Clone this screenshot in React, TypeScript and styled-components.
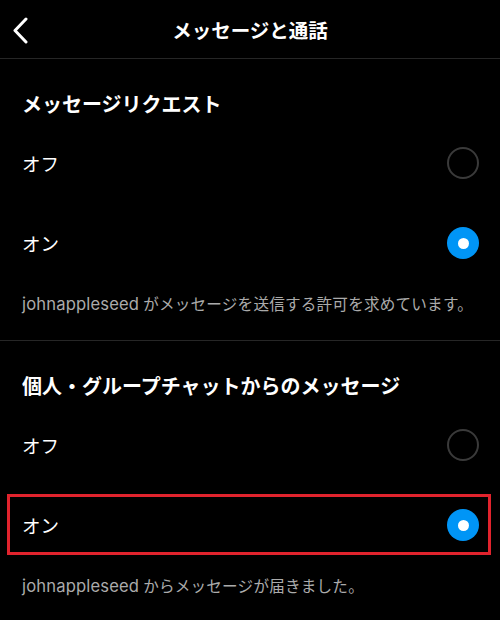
import React from "react";
import styled, { createGlobalStyle } from "styled-components";

const GlobalStyle = createGlobalStyle`
  html, body {
    margin: 0;
    padding: 0;
    background: #000;
  }
  body {
    font-family: "Inter", "Noto Sans CJK JP", "Noto Sans", sans-serif;
    color: #fff;
    -webkit-font-smoothing: antialiased;
  }
`;

const Page = styled.div`
  width: 500px;
  height: 620px;
  background: #000;
  overflow: hidden;
`;

const Header = styled.header`
  display: grid;
  grid-template-columns: 60px 1fr 60px;
  align-items: center;
  height: 58px;
  border-bottom: 1px solid #262626;
`;

const BackButton = styled.div`
  display: flex;
  align-items: center;
  padding-left: 12px;
  padding-top: 2px;
`;

const Title = styled.h1`
  margin: 0;
  text-align: center;
  font-family: "Noto Sans CJK JP", sans-serif;
  font-size: 19.5px;
  font-weight: 600;
  line-height: 24px;
  padding-top: 1px;
`;

const Section = styled.section<{ $divider?: boolean }>`
  display: flex;
  flex-direction: column;
  padding: 33px 0 26px;
  border-bottom: ${(p) => (p.$divider ? "1px solid #262626" : "none")};
`;

const SectionTitle = styled.h2`
  margin: 0 0 7px;
  padding: 0 22px;
  font-family: "Noto Sans CJK JP", sans-serif;
  font-size: 20px;
  font-weight: 700;
  line-height: 24px;
`;

const Row = styled.div<{ $highlight?: boolean }>`
  position: relative;
  display: flex;
  align-items: center;
  justify-content: space-between;
  height: 80px;
  padding: 0 21px 0 22px;
  box-sizing: border-box;

  ${(p) =>
    p.$highlight &&
    `
    &::after {
      content: "";
      position: absolute;
      top: 9px;
      bottom: 10px;
      left: 7px;
      right: 9px;
      border: 3.5px solid #e1232d;
      pointer-events: none;
    }
  `}
`;

const RowLabel = styled.span`
  font-family: "Noto Sans CJK JP", sans-serif;
  font-size: 18.5px;
  font-weight: 400;
  line-height: 24px;
`;

const Radio = styled.span<{ $checked?: boolean }>`
  display: flex;
  align-items: center;
  justify-content: center;
  width: 32px;
  height: 32px;
  box-sizing: border-box;
  border-radius: 50%;
  border: ${(p) => (p.$checked ? "none" : "2px solid #3a3a3a")};
  background: ${(p) => (p.$checked ? "#0095f6" : "transparent")};

  &::after {
    content: "";
    display: ${(p) => (p.$checked ? "block" : "none")};
    width: 11px;
    height: 11px;
    border-radius: 50%;
    background: #fff;
  }
`;

const Description = styled.p`
  margin: 10px 0 0;
  padding: 0 22px;
  line-height: 20px;
  color: #ababab;
  white-space: nowrap;
`;

const User = styled.span`
  font-family: "Inter", sans-serif;
  font-size: 16.6px;
  letter-spacing: 0.15px;
  margin-right: 4px;
`;

const Jp = styled.span`
  font-family: "Noto Sans CJK JP", sans-serif;
  font-size: 15.6px;
  letter-spacing: 0.2px;
`;

const ChevronLeft = () => (
  <svg width="16" height="27" viewBox="0 0 16 27" fill="none">
    <polyline
      points="14,2 3,13.5 14,25"
      stroke="#fff"
      strokeWidth="3"
      strokeLinecap="round"
      strokeLinejoin="round"
    />
  </svg>
);

type Option = { label: string; checked: boolean; highlight?: boolean };

const SettingSection: React.FC<{
  title: string;
  options: Option[];
  user: string;
  text: string;
  divider?: boolean;
}> = ({ title, options, user, text, divider }) => (
  <Section $divider={divider}>
    <SectionTitle>{title}</SectionTitle>
    {options.map((o) => (
      <Row key={o.label} $highlight={o.highlight}>
        <RowLabel>{o.label}</RowLabel>
        <Radio $checked={o.checked} />
      </Row>
    ))}
    <Description>
      <User>{user}</User>
      <Jp>{text}</Jp>
    </Description>
  </Section>
);

export default function App() {
  return (
    <>
      <GlobalStyle />
      <Page>
        <Header>
          <BackButton>
            <ChevronLeft />
          </BackButton>
          <Title>メッセージと通話</Title>
          <span />
        </Header>
        <SettingSection
          divider
          title="メッセージリクエスト"
          options={[
            { label: "オフ", checked: false },
            { label: "オン", checked: true },
          ]}
          user="johnappleseed"
          text="がメッセージを送信する許可を求めています。"
        />
        <SettingSection
          title="個人・グループチャットからのメッセージ"
          options={[
            { label: "オフ", checked: false },
            { label: "オン", checked: true, highlight: true },
          ]}
          user="johnappleseed"
          text="からメッセージが届きました。"
        />
      </Page>
    </>
  );
}
